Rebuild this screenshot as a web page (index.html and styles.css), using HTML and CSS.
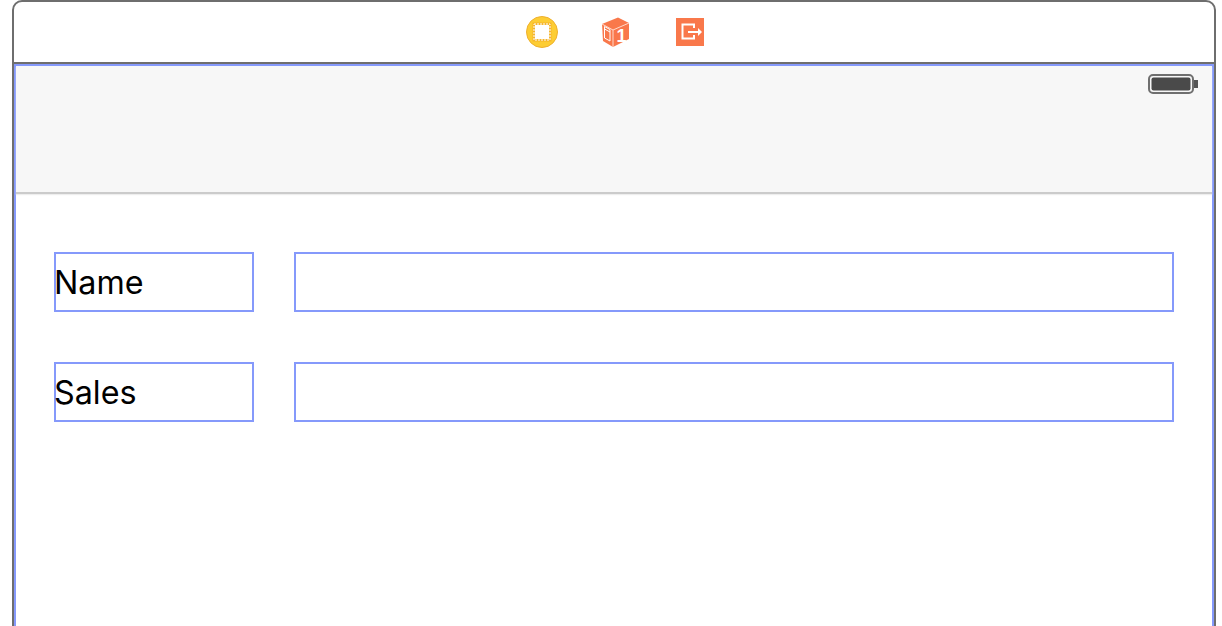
FILE: index.html
```html
<!DOCTYPE html>
<html>

	<head>
		<meta charset="UTF-8">
		<title></title>
		<link rel="stylesheet" href="styles.css">
	</head>

	<body>
		<div class="scene">
			<div class="dock">
				<svg class="dock-icon" width="34" height="34" viewBox="0 0 34 34">
					<circle cx="17" cy="17" r="15.5" fill="#fdcd33" stroke="#eeb02f" stroke-width="1"/>
					<rect x="7.5" y="7.5" width="19" height="19" fill="#f5b52c"/>
					<rect x="9" y="9" width="16" height="16" fill="none" stroke="#fff" stroke-width="1" stroke-dasharray="2 1"/>
					<rect x="10" y="10" width="14" height="14" fill="#fff"/>
				</svg>
				<svg class="dock-icon" width="28" height="30" viewBox="0 0 28 30">
					<path d="M0 7 L16 0.5 L27 6 L27 22 L11 30 L1 24 Z" fill="#f9784b"/>
					<path d="M0 7 L11 13 L27 6 M11 13 L11 30" fill="none" stroke="#ffd9cb" stroke-width="1"/>
					<path d="M2.5 9.5 L8 12.5 L8 24 L2.5 21 Z M2.5 12 L8 15" fill="none" stroke="#fff" stroke-width="1"/>
					<text class="cube-num" x="19.5" y="25" transform="skewY(-6 19.5 25)">1</text>
				</svg>
				<svg class="dock-icon dock-exit" width="28" height="28" viewBox="0 0 28 28">
					<rect width="28" height="28" fill="#f9784b"/>
					<path d="M18 10 V6.5 H6.5 V20.5 H18 V17" fill="none" stroke="#fff" stroke-width="2"/>
					<path d="M12 13 H22 V10 L26 14 L22 18 V15 H12 Z" fill="#fff"/>
				</svg>
			</div>
			<div class="view">
				<div class="status-bar">
					<svg class="battery" width="50" height="20" viewBox="0 0 50 20">
						<rect x="1" y="1" width="44" height="18" rx="4" fill="#f7f7f7" stroke="#6f6f6f" stroke-width="2"/>
						<rect x="3.5" y="3.5" width="39" height="13" rx="2" fill="#4a4a4a"/>
						<rect x="46" y="6" width="4" height="8" fill="#555"/>
					</svg>
				</div>
				<div class="form">
					<div class="row">
						<div class="label">Name</div>
						<div class="field"></div>
					</div>
					<div class="row">
						<div class="label">Sales</div>
						<div class="field"></div>
					</div>
				</div>
			</div>
		</div>
	</body>

</html>
```

FILE: styles.css
```css
* {
	margin: 0;
	padding: 0;
	box-sizing: border-box;
}

html,
body {
	height: 626px;
	overflow: hidden;
	background: #fff;
}

.scene {
	width: 1204px;
	height: 640px;
	margin-left: 12px;
	border: 2px solid #6e6e6e;
	border-radius: 10px 10px 0 0;
	overflow: hidden;
	font-family: "Inter", "Liberation Sans", sans-serif;
}

.dock {
	height: 62px;
	display: flex;
	align-items: center;
	gap: 43px;
	padding-left: 511px;
	border-bottom: 2px solid #6e6e6e;
}

.dock-exit {
	margin-left: 3px;
}

.cube-num {
	font-family: "Liberation Sans", sans-serif;
	font-weight: bold;
	font-size: 18px;
	fill: #fff;
	text-anchor: middle;
}

.view {
	height: 576px;
	border: 2px solid #8599fb;
	border-bottom: none;
}

.status-bar {
	height: 128px;
	background: #f7f7f7;
	border-bottom: 2px solid #cbcbcb;
	box-shadow: 0 1px 1px #eee;
	display: flex;
	justify-content: flex-end;
	align-items: flex-start;
	padding: 8px 14px 0 0;
}

.form {
	padding: 58px 38px 0 38px;
	display: flex;
	flex-direction: column;
	gap: 50px;
}

.row {
	display: flex;
	gap: 40px;
}

.label {
	width: 200px;
	height: 60px;
	border: 2px solid #8599fb;
	font-size: 32.3px;
	line-height: 58px;
	text-indent: -2px;
	color: #000;
}

.field {
	flex: 1;
	height: 60px;
	border: 2px solid #8599fb;
	position: relative;
}

/* rounded text field outline, only its corners show inside the selection box */
.field::before {
	content: "";
	position: absolute;
	top: -2px;
	right: -2px;
	bottom: -2px;
	left: -2px;
	border: 1px solid #d5d5d5;
	border-radius: 9px;
	z-index: -1;
}
```
